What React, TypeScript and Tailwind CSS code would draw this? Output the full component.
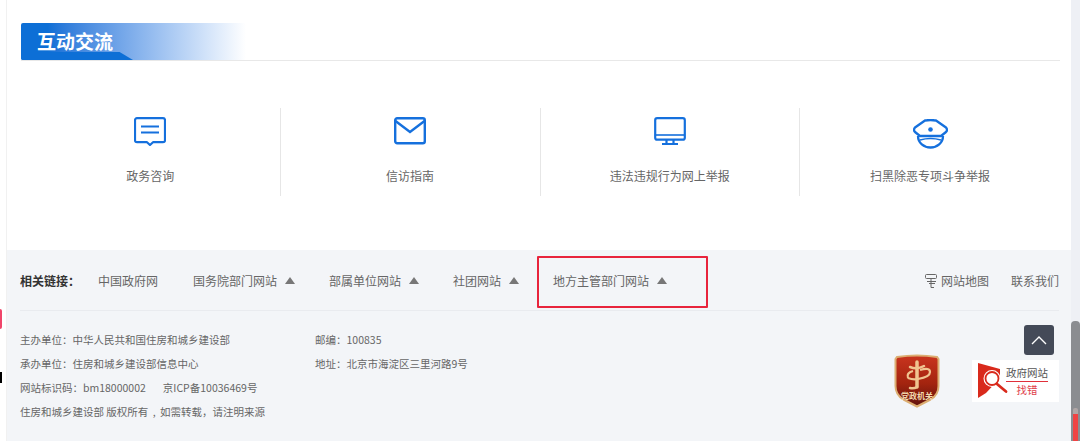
import React from 'react'

const cjk = { fontFamily: '"Noto Sans CJK SC", "Liberation Sans", sans-serif' }

const ChatIcon = () => (
  <svg width="32" height="29" viewBox="0 0 32 29" fill="none" stroke="#1570dd" strokeWidth="2.200">
    <path d="M3 1.200h26a2 2 0 0 1 2 2v20a2 2 0 0 1-2 2h-10l-3 2.800-3-2.800h-10a2 2 0 0 1-2-2v-20a2 2 0 0 1 2-2z" strokeLinejoin="round" />
    <path d="M7 9.500h18M7 15.500h18" />
  </svg>
)

const MailIcon = () => (
  <svg width="32" height="28" viewBox="0 0 32 28" fill="none" stroke="#1570dd" strokeWidth="2.400">
    <rect x="1.200" y="1.200" width="29.600" height="25" rx="2" />
    <path d="M1.500 4l14.500 11 14.500-11" />
  </svg>
)

const ScreenIcon = () => (
  <svg width="32" height="28" viewBox="0 0 32 28" fill="none" stroke="#1570dd" strokeWidth="2.200">
    <rect x="1.200" y="1.200" width="29.600" height="21.500" rx="2" />
    <path d="M2 18h28" strokeWidth="1.600" />
    <path d="M12.500 23v3.500M19.500 23v3.500M8 27h16" />
  </svg>
)

const CapIcon = () => (
  <svg width="35" height="30" viewBox="0 0 35 30" fill="none" stroke="#1570dd" strokeWidth="2.300" strokeLinejoin="round" className="mt-[2px]">
    <path d="M12 1.500q5.500-1 11 0l10 7q2 2.500 0 4.500l-5 4h-21l-5-4q-2-2 0-4.500z" />
    <path d="M5 17c0 7 6 11.500 12.500 11.500s12.500-4.500 12.500-11.500" />
    <path d="M7 21q10.500-3 21 0" strokeWidth="1.600" />
    <circle cx="17.500" cy="10.500" r="2.300" fill="#1570dd" stroke="none" />
  </svg>
)

const Caret = () => (
  <span className="ml-2 w-0 h-0 border-x-[5.500px] border-x-transparent border-b-[7px] border-b-[#777]" />
)

const SitemapIcon = () => (
  <svg width="12" height="14" viewBox="0 0 12 14" fill="none" stroke="#666" strokeWidth="1">
    <rect x="0.500" y="0.500" width="11" height="4" rx="1" />
    <path d="M6 5v3M2 7.500h9M4 9.500h6M6 8v5.500h3" />
  </svg>
)

const Shield = () => (
  <div className="relative w-[46px] h-[54px]">
    <svg width="46" height="54" viewBox="0 0 46 54">
      <defs>
        <linearGradient id="red" x1="0" y1="0" x2="0" y2="1">
          <stop offset="0" stopColor="#c9341e" />
          <stop offset="0.55" stopColor="#a3240f" />
          <stop offset="1" stopColor="#5f120d" />
        </linearGradient>
      </defs>
      <path d="M3 3q20-3 40 0l1.500 2v27q0 9-8 13.500l-13.500 7-13.500-7q-8-4.500-8-13.500v-27z" fill="url(#red)" stroke="#dcae72" strokeWidth="2" />
      <path d="M23 8v25" fill="none" stroke="#f0c490" strokeWidth="3.500" strokeLinecap="round" />
      <path d="M16 13q7 3 14-1" fill="none" stroke="#f0c490" strokeWidth="2.500" strokeLinecap="round" />
      <path d="M14 24q-2-5 5-7M26 16q10-3 10 2t-12 7q-5 1-10-1" fill="none" stroke="#f0c490" strokeWidth="2.200" />
      <path d="M23 33q-3 2-7 1" fill="none" stroke="#f0c490" strokeWidth="2.500" strokeLinecap="round" />
    </svg>
    <span className="absolute left-0 right-0 top-[36px] text-center text-[8px] leading-[11px] text-[#f3d9b0] font-bold">党政机关</span>
  </div>
)

const FindError = () => (
  <div className="flex items-center w-[87px] h-[42px] bg-white pl-[6px]">
    <svg width="28" height="36" viewBox="0 0 28 36" className="shrink-0 overflow-visible">
      <path d="M0 0l22 6v9l-14 15-8 5z" fill="#d92a1c" />
      <circle cx="14" cy="15.500" r="7" fill="#fff" stroke="#fff" strokeWidth="3" />
      <circle cx="14" cy="15.500" r="6.500" fill="#fff" stroke="#d92a1c" strokeWidth="1.800" />
      <path d="M19 21l9 7.500" stroke="#d92a1c" strokeWidth="2.800" strokeLinecap="round" />
    </svg>
    <div className="flex flex-col items-center w-[42px]">
      <span className="text-[10.500px] leading-[15px] text-[#555] whitespace-nowrap">政府网站</span>
      <span className="w-[42px] h-px bg-[#e0303a] my-[1px]" />
      <span className="text-[10.500px] leading-[14px] text-[#e0404a]">找错</span>
    </div>
  </div>
)

const services = [
  { icon: <ChatIcon />, name: '政务咨询' },
  { icon: <MailIcon />, name: '信访指南' },
  { icon: <ScreenIcon />, name: '违法违规行为网上举报' },
  { icon: <CapIcon />, name: '扫黑除恶专项斗争举报' },
]

const links = [
  { name: '中国政府网', caret: false },
  { name: '国务院部门网站', caret: true },
  { name: '部属单位网站', caret: true },
  { name: '社团网站', caret: true },
  { name: '地方主管部门网站', caret: true },
]

const App = () => {
  return (
    <div className="relative flex w-[1080px] h-[441px] overflow-hidden bg-white" style={cjk}>
      {/* left strip of the page behind */}
      <div className="relative w-[7px] shrink-0 bg-white border-r border-[#f1f1f1]">
        <div className="absolute left-0 top-[309px] w-[2px] h-[20px] bg-[#f0456a] rounded-r" />
        <div className="absolute left-0 top-[372px] w-[2px] h-[11px] bg-black" />
      </div>

      <main className="flex-1 flex flex-col min-w-0">
        {/* interaction section */}
        <section className="h-[250px] pt-[23px] pl-[14px] pr-[11px]">
          <div className="h-[38px] border-b border-[#e8e8e8]">
            <div className="relative w-[225px] h-[37px] rounded-[2px] bg-gradient-to-r from-[#0d6fd6] from-[12%] to-white overflow-hidden">
              <div className="absolute left-0 bottom-0 w-[112px] h-[8px] bg-[#0d6fd6] [clip-path:polygon(0_0,88%_0,100%_100%,0_100%)]" />
              <h2 className="relative pl-[16px] text-[19px] leading-[36px] font-bold text-white">互动交流</h2>
            </div>
          </div>
          <div className="grid grid-cols-4 mt-[47px] h-[88px]">
            {services.map((s, i) => (
              <div key={s.name} className={`flex flex-col items-center pt-[9px] ${i < 3 ? 'border-r border-[#e6e6e6]' : ''}`}>
                <div className="h-[31px] flex items-start justify-center">{s.icon}</div>
                <span className="mt-[19px] text-[12px] leading-[18px] text-[#666]">{s.name}</span>
              </div>
            ))}
          </div>
        </section>

        {/* footer */}
        <footer className="flex-1 bg-[#f3f5f8] pl-[13px] pr-[12px] text-[#666]">
          <div className="flex items-center h-[61px] pt-[1px] border-b border-[#e9ebef] text-[12px]">
            <strong className="font-bold text-[#333] mr-[18px]">相关链接{'\uFF1A'}</strong>
            <div className="flex items-center gap-x-[34px]">
              {links.map((l, i) => (
                <span key={l.name} className={`flex items-center ${i === 0 ? 'mr-[1px]' : ''}`}>
                  {l.name}
                  {l.caret && <Caret />}
                </span>
              ))}
            </div>
            <div className="ml-auto flex items-center">
              <SitemapIcon />
              <span className="ml-[4px]">网站地图</span>
              <span className="ml-[22px]">联系我们</span>
            </div>
          </div>

          <div className="flex justify-between pt-[17px]">
            <div className="flex text-[10.500px] leading-[24px]">
              <div className="w-[295px]">
                <p>主办单位{'\uFF1A'}中华人民共和国住房和城乡建设部</p>
                <p>承办单位{'\uFF1A'}住房和城乡建设部信息中心</p>
                <p>网站标识码{'\uFF1A'}bm18000002<span className="ml-[17px]">京ICP备10036469号</span></p>
                <p>住房和城乡建设部 版权所有<span className="mx-[2px]"> , </span>如需转载{'\uFF0C'}请注明来源</p>
              </div>
              <div>
                <p>邮编{'\uFF1A'}100835</p>
                <p>地址{'\uFF1A'}北京市海淀区三里河路9号</p>
              </div>
            </div>
            <div className="flex items-center gap-x-[32px] h-[54px] mt-[26px]">
              <Shield />
              <FindError />
            </div>
          </div>
        </footer>
      </main>

      {/* browser scrollbar */}
      <div className="relative w-[9px] shrink-0 bg-[#eef0f5]">
        <div className="absolute left-0 right-0 top-[321px] bottom-0 bg-[#8b8d91] rounded-t-[4px]" />
        <div className="absolute left-[2px] right-[2px] top-[408px] bottom-0 bg-[#ef4444] rounded-t-[2px] border-t-[6px] border-[#b0a6a6]" />
      </div>

      {/* back to top */}
      <button className="absolute left-[1024px] top-[325px] w-[30px] h-[30px] rounded-[3px] bg-[#444a58] flex items-center justify-center">
        <svg width="16" height="10" viewBox="0 0 16 10" fill="none" stroke="#fff" strokeWidth="1.400">
          <path d="M1 9l7-7 7 7" />
        </svg>
      </button>

      {/* red annotation box */}
      <div className="absolute left-[537px] top-[256px] w-[171px] h-[52px] border-2 border-[#e8243c] rounded-[1px]" />
    </div>
  )
}

export default App
